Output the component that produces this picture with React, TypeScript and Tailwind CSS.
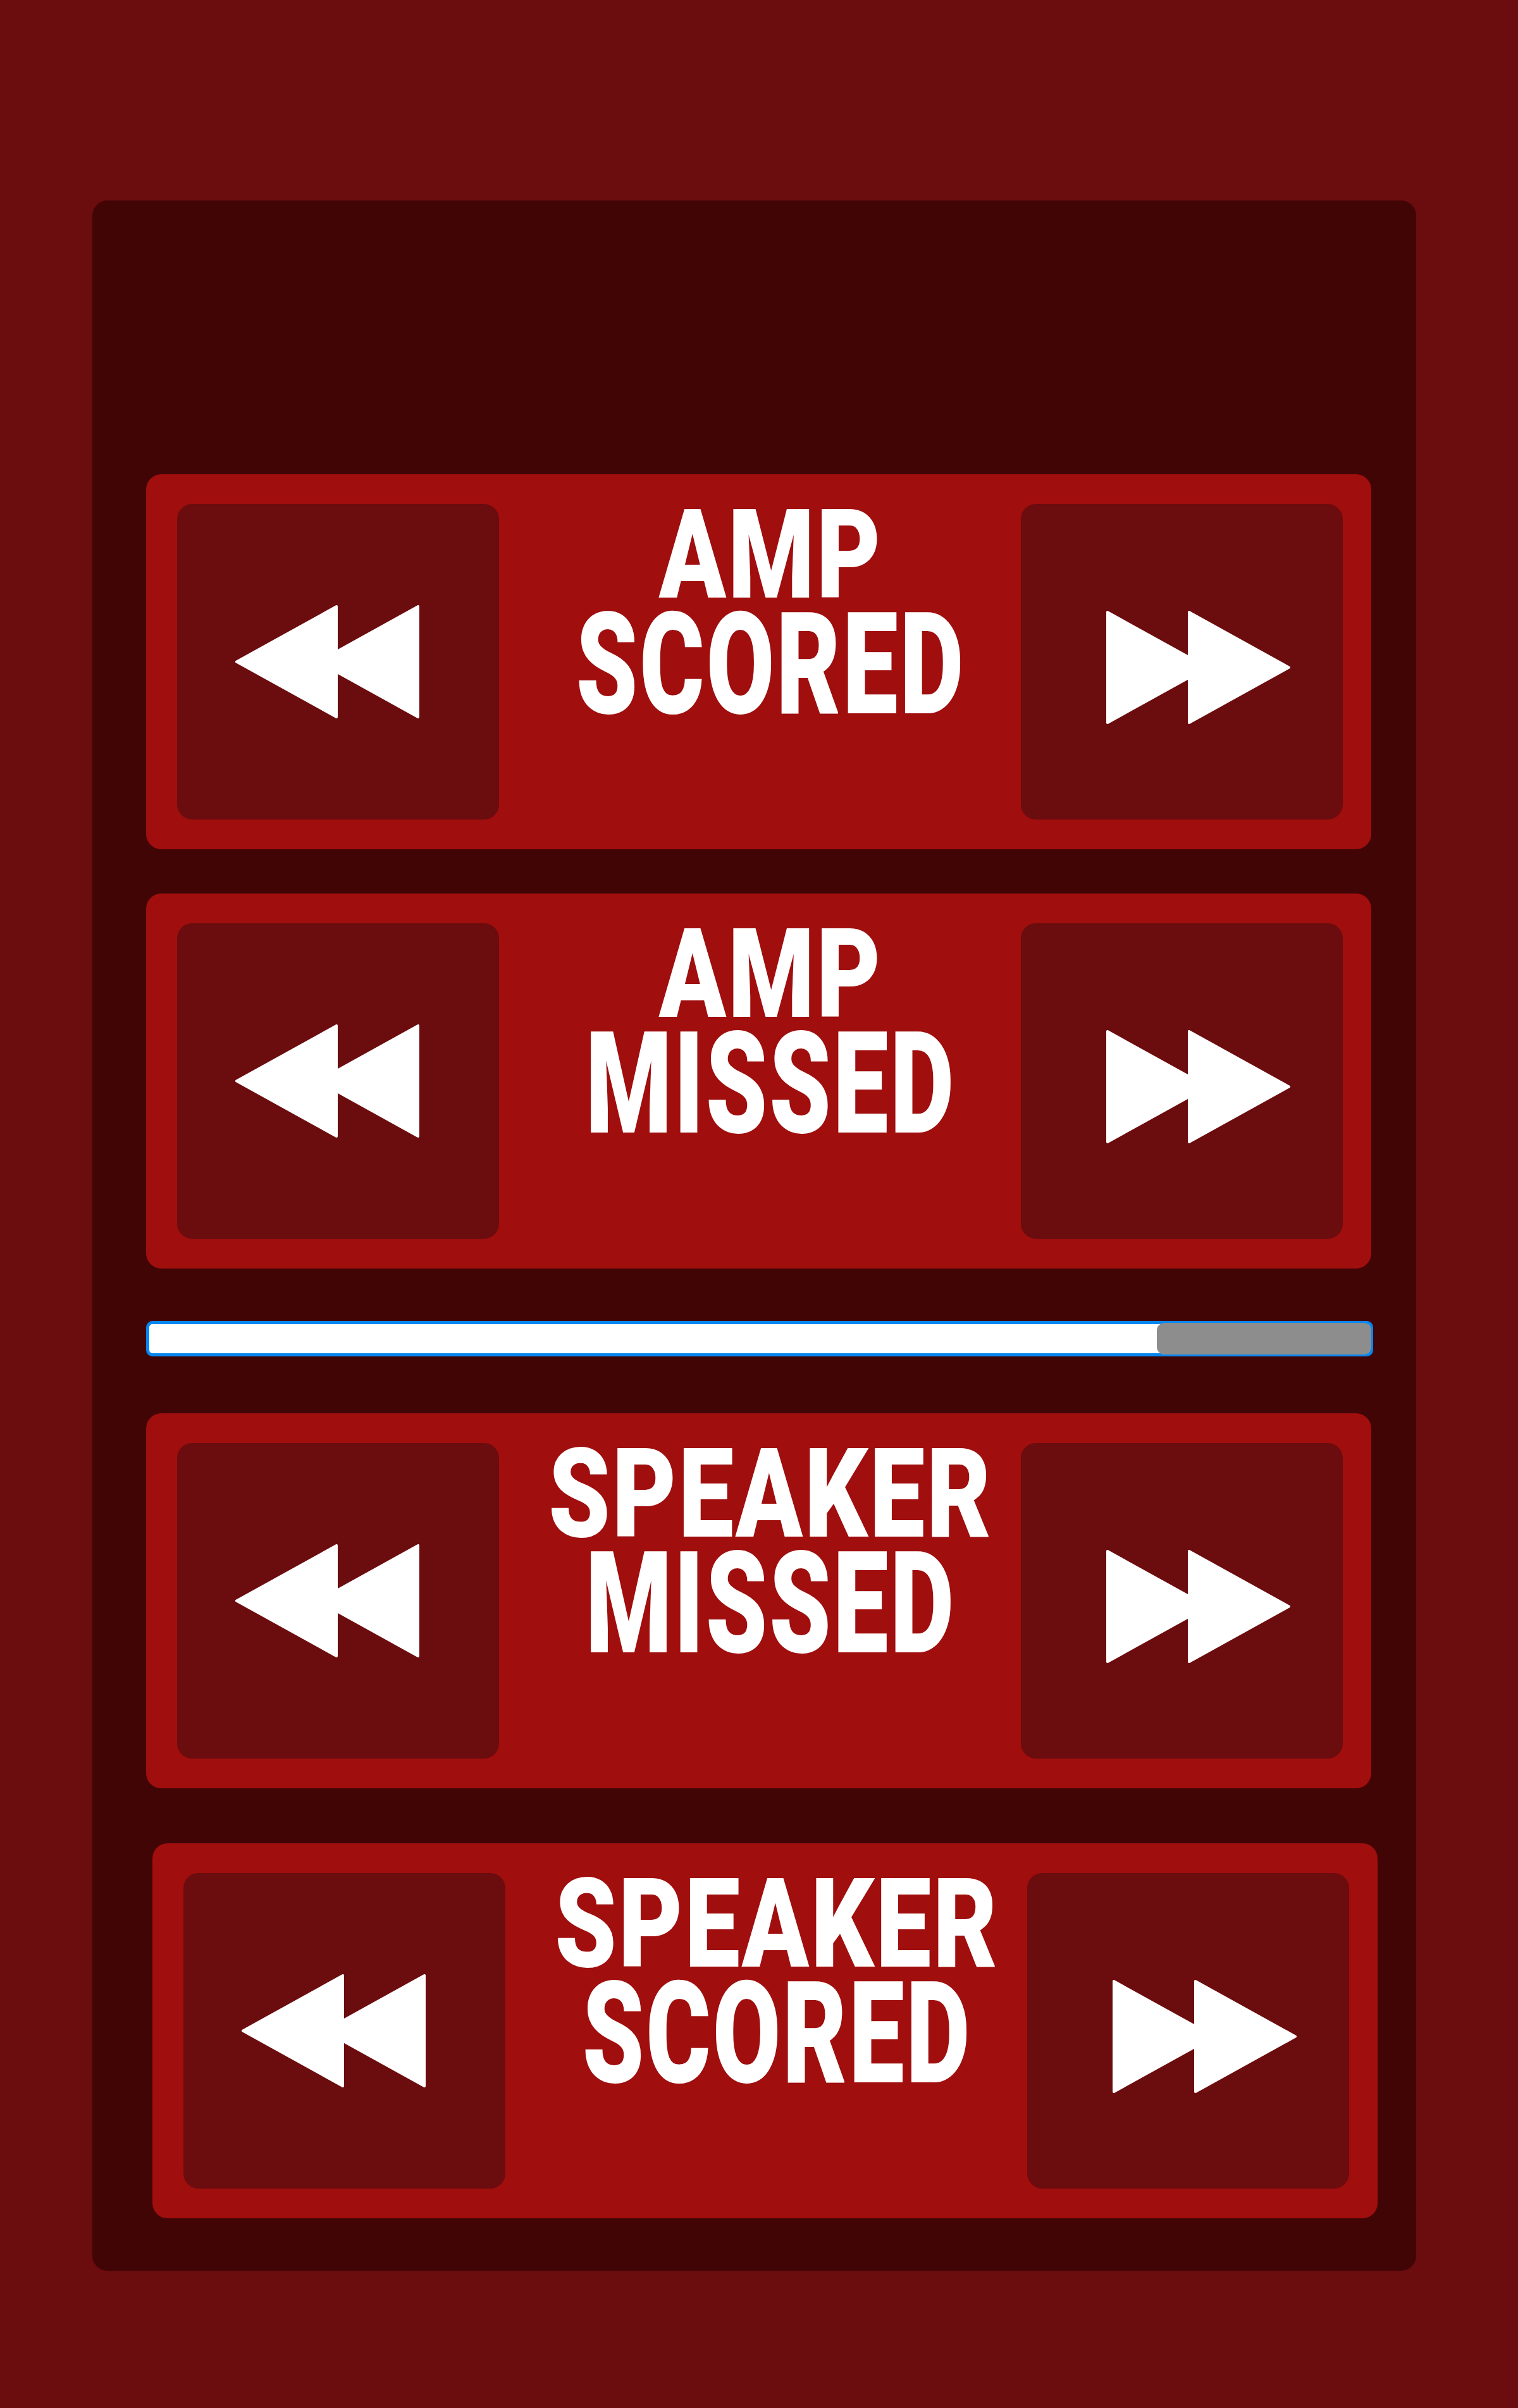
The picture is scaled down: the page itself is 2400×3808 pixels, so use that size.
import React from 'react';

interface ScoreCardProps {
  top: string;
  bottom: string;
  shifted?: boolean;
}

const RewindIcon: React.FC = () => (
  <svg width="291" height="179" viewBox="0 0 291 179" className="-ml-[34px] shrink-0">
    <path
      d="M131 89.5 L289 2 L289 177 Z M2 89.5 L160 2 L160 177 Z"
      fill="#ffffff"
      stroke="#ffffff"
      strokeWidth="4"
      strokeLinejoin="round"
    />
  </svg>
);

const ForwardIcon: React.FC = () => (
  <svg width="291" height="179" viewBox="0 0 291 179" className="ml-[51px] mt-[18px] shrink-0">
    <path
      d="M2 2 L2 177 L160 89.5 Z M131 2 L131 177 L289 89.5 Z"
      fill="#ffffff"
      stroke="#ffffff"
      strokeWidth="4"
      strokeLinejoin="round"
    />
  </svg>
);

const ScoreCard: React.FC<ScoreCardProps> = ({ top, bottom, shifted }) => {
  return (
    <div
      className={`flex h-[593px] w-[1937px] shrink-0 justify-between rounded-[24px] bg-[#a00e0e] py-[47px] pl-[49px] pr-[45px] ${
        shifted ? 'ml-[95px]' : 'ml-[85px]'
      }`}
    >
      {/* Botón restar */}
      <button className="flex h-full w-[509px] items-center justify-center rounded-[24px] bg-[#6b0c0e]">
        <RewindIcon />
      </button>

      {/* Etiqueta */}
      <div className="flex flex-1 flex-col items-center pl-[34px] pt-[25px] font-['Roboto',sans-serif] font-black tracking-[3px] text-white">
        <span className="block h-[111px] scale-y-[1.26] text-[156px] leading-[111px]">{top}</span>
        <span className="mt-[62px] block h-[111px] scale-y-[1.44] text-[156px] leading-[111px]">{bottom}</span>
      </div>

      {/* Botón sumar */}
      <button className="flex h-full w-[509px] items-center justify-center rounded-[24px] bg-[#6b0c0e]">
        <ForwardIcon />
      </button>
    </div>
  );
};

export default function App() {
  const progress = 0.825;

  return (
    <div className="h-[3808px] w-[2400px] bg-[#6b0c0e] pl-[146px] pt-[317px]">
      <div className="flex h-[3274px] w-[2093px] flex-col rounded-[24px] bg-[#420506] pt-[433px]">
        <ScoreCard top="AMP" bottom="SCORED" />
        <div className="mt-[70px]">
          <ScoreCard top="AMP" bottom="MISSED" />
        </div>

        {/* Barra de tiempo */}
        <div className="relative ml-[85px] mt-[83px] h-[56px] w-[1940px] shrink-0 rounded-[10px] border-[5px] border-[#0687f0] bg-white">
          <div
            className="absolute -bottom-[2px] -right-[2px] -top-[2px] rounded-[12px] bg-[#8d8d8d]"
            style={{ width: `${Math.round((1 - progress) * 1937)}px` }}
          />
        </div>

        <div className="mt-[90px]">
          <ScoreCard top="SPEAKER" bottom="MISSED" />
        </div>
        <div className="mt-[87px]">
          <ScoreCard top="SPEAKER" bottom="SCORED" shifted />
        </div>
      </div>
    </div>
  );
}
